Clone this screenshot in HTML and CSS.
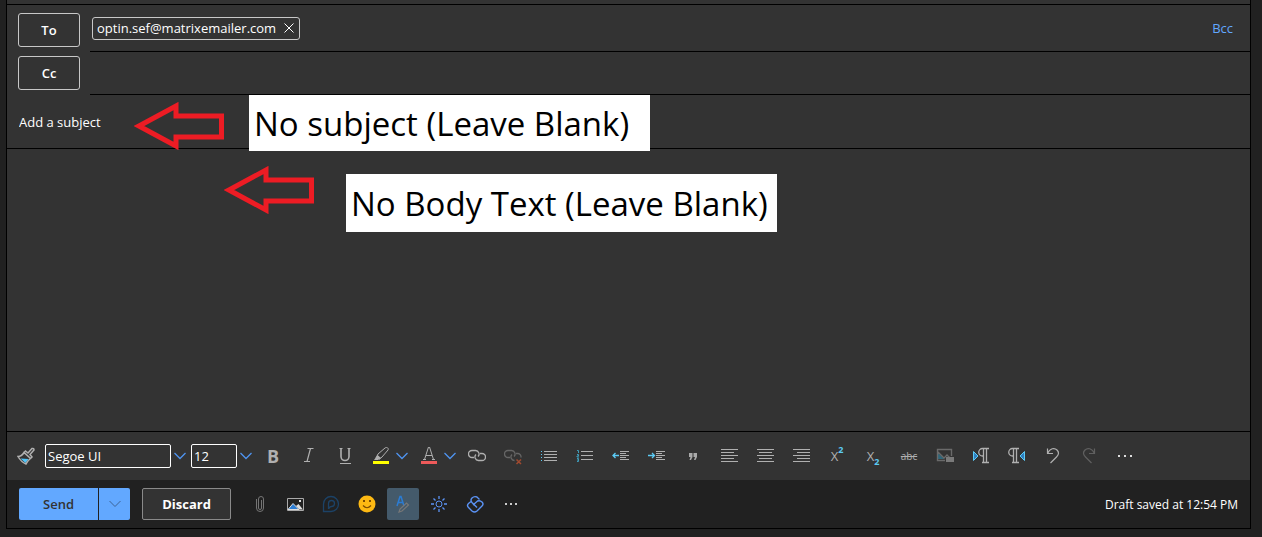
FILE: index.html
```html
<!DOCTYPE html>
<html lang="en">
<head>
  <meta charset="UTF-8">
  <meta name="viewport" content="width=device-width, initial-scale=1.0">
  <title>New message</title>
  <link rel="stylesheet" href="styles.css">
</head>
<body>
  <form class="compose">
    <div class="top-strip"></div>

    <!-- Recipients -->
    <div class="row row-to">
      <button type="button" class="recipient-button">To</button>
      <div class="field">
        <span class="chip">optin.sef@matrixemailer.com
          <button type="button" class="chip-remove" aria-label="Remove">
            <svg width="10" height="10" viewBox="0 0 10 10"><path d="M.5 .5l9 9M9.5 .5l-9 9"/></svg>
          </button>
        </span>
        <a href="#" class="bcc">Bcc</a>
      </div>
    </div>
    <div class="row row-cc">
      <button type="button" class="recipient-button">Cc</button>
      <div class="field"></div>
    </div>

    <input type="text" class="subject" placeholder="Add a subject" aria-label="Subject">
    <textarea class="message" aria-label="Message body"></textarea>

    <!-- Formatting toolbar -->
    <div class="toolbar">
      <button type="button" class="tool" aria-label="Format painter">
        <svg width="18" height="18" viewBox="0 0 18 18"><path d="M3.500 11.500l8 .5-3 4z" fill="#4fc3f7" stroke="none"/><path d="M1 9.500c2.500 0 4.500-1.500 6-4l6.500 6c-2 1.500-3.500 3-4.500 5.500C5.500 15.500 3 13 1 9.500zM7 5.500L8.500 4l2.500 2L15 1.500q2-.5 2 1.500L13 7.500l2 2.500-1.500 1.500" stroke-width="1.500"/></svg>
      </button>
      <input type="text" class="combo font-name" value="Segoe UI" aria-label="Font">
      <button type="button" class="arrow" aria-label="Choose font"><svg width="12" height="8" viewBox="0 0 12 8"><path d="M.5 1L6 6.500 11.500 1"/></svg></button>
      <input type="text" class="combo font-size" value="12" aria-label="Font size">
      <button type="button" class="arrow" aria-label="Choose font size"><svg width="12" height="8" viewBox="0 0 12 8"><path d="M.5 1L6 6.500 11.500 1"/></svg></button>
      <button type="button" class="tool bold">B</button>
      <button type="button" class="tool" aria-label="Italic">
        <svg width="18" height="18" viewBox="0 0 18 18"><path d="M7.500 1.500h6M4 14.500h6M10.500 1.500L7 14.500" stroke-width="1.200"/></svg>
      </button>
      <button type="button" class="tool" aria-label="Underline">
        <svg width="18" height="18" viewBox="0 0 18 18"><path d="M5 1v8.500a4 4 0 0 0 8 0V1" stroke-width="1.600"/><path d="M3.500 1.500h3M11.500 1.500h3M4 16.500h11"/></svg>
      </button>
      <div class="split">
        <button type="button" class="swatch" aria-label="Highlight">
          <svg width="18" height="18" viewBox="0 0 18 18"><path d="M4 11l2-4 7-6c2-1.500 4 .5 3 2L10 10l-3 2.500"/><path d="M2 13l3.500-5L9 11l-3 2z" fill="#b0b0b0" stroke="none"/><path d="M1 14h16v3H1z" fill="#ff0" stroke="none"/></svg>
        </button>
        <button type="button" class="arrow" aria-label="Highlight color"><svg width="12" height="8" viewBox="0 0 12 8"><path d="M.5 1L6 6.500 11.500 1"/></svg></button>
      </div>
      <div class="split">
        <button type="button" class="swatch" aria-label="Font color">
          <svg width="18" height="18" viewBox="0 0 18 18"><path d="M4.500 12.500L8.500 0h1L13.500 12.500M6 8.500h6M3 12.500h3M12 12.500h3"/><path d="M1 14h16v3H1z" fill="#ee5a5a" stroke="none"/></svg>
        </button>
        <button type="button" class="arrow" aria-label="Pick font color"><svg width="12" height="8" viewBox="0 0 12 8"><path d="M.5 1L6 6.500 11.500 1"/></svg></button>
      </div>
      <button type="button" class="tool" aria-label="Insert link">
        <svg width="18" height="18" viewBox="0 0 18 18"><path d="M6 10.500H4a3.500 3.500 0 0 1 0-7h3.500a3.500 3.500 0 0 1 2.500 6M12 6.500h2a3.500 3.500 0 0 1 0 7h-3.500a3.500 3.500 0 0 1-2.500-6" stroke-width="1.300"/></svg>
      </button>
      <button type="button" class="tool" aria-label="Remove link">
        <svg width="18" height="18" viewBox="0 0 18 18"><path d="M6 10.500H4a3.500 3.500 0 0 1 0-7h3.500a3.500 3.500 0 0 1 2.500 6M12 6.500h2a3.500 3.500 0 0 1 3 4M8 7.500a3.500 3.500 0 0 0 2.500 6" stroke="#666" stroke-width="1.300"/><path d="M12.500 12.500l4.500 4.500M17 12.500l-4.500 4.500" stroke="#a04a30" stroke-width="1.500"/></svg>
      </button>
      <button type="button" class="tool" aria-label="Bullets">
        <svg width="18" height="18" viewBox="0 0 18 18"><path d="M4 4.500h13M4 7.500h13M4 10.500h13M4 13.500h13"/><path d="M1 4.500h1M1 7.500h1M1 10.500h1M1 13.500h1" stroke="#5ccbf5"/></svg>
      </button>
      <button type="button" class="tool" aria-label="Numbering">
        <svg width="18" height="18" viewBox="0 0 18 18"><path d="M5 4.500h12M5 8.500h12M5 12.500h12"/><path d="M1 3.500h1.500V6M1 7.500h1.500v1.500H1v1h2M1 11.500h1.500v3H1M1 13h1.500" stroke="#3f9dbb"/></svg>
      </button>
      <button type="button" class="tool" aria-label="Decrease indent">
        <svg width="18" height="18" viewBox="0 0 18 18"><path d="M8 4.500h9M8 6.500h6M8 8.500h9M8 10.500h6M8 12.500h9"/><path d="M1 8.500h6M3.500 6L1 8.500 3.500 11" stroke="#5ccbf5" stroke-width="1.300"/></svg>
      </button>
      <button type="button" class="tool" aria-label="Increase indent">
        <svg width="18" height="18" viewBox="0 0 18 18"><path d="M8 4.500h9M8 6.500h6M8 8.500h9M8 10.500h6M8 12.500h9"/><path d="M0 8.500h6.500M4 6l2.500 2.500L4 11" stroke="#5ccbf5" stroke-width="1.300"/></svg>
      </button>
      <button type="button" class="tool" aria-label="Quote">
        <svg width="18" height="18" viewBox="0 0 18 18"><path d="M5 6h3.500v4L7 13H5.500l1-3H5zM9.500 6H13v4L11.500 13H10l1-3H9.500z" fill="#aaa" stroke="none"/></svg>
      </button>
      <button type="button" class="tool" aria-label="Align left">
        <svg width="18" height="18" viewBox="0 0 18 18"><path d="M1 2.500h17M1 5.500h13M1 8.500h17M1 11.500h13M1 14.500h17"/></svg>
      </button>
      <button type="button" class="tool" aria-label="Align center">
        <svg width="18" height="18" viewBox="0 0 18 18"><path d="M1 2.500h17M3 5.500h13M1 8.500h17M3 11.500h13M1 14.500h17"/></svg>
      </button>
      <button type="button" class="tool" aria-label="Align right">
        <svg width="18" height="18" viewBox="0 0 18 18"><path d="M1 2.500h17M5 5.500h13M1 8.500h17M5 11.500h13M1 14.500h17"/></svg>
      </button>
      <button type="button" class="tool script">X<sup>2</sup></button>
      <button type="button" class="tool script">X<sub>2</sub></button>
      <button type="button" class="tool strike">abc</button>
      <button type="button" class="tool" aria-label="Image alt text">
        <svg width="18" height="18" viewBox="0 0 18 18"><path d="M2 12V6l6.500 6z" fill="#2f6679" stroke="none"/><path d="M9 13.500H1.500V2.500h14V9M2 5l6 6 3-3 3 3" stroke="#6a6a6a" stroke-width="1.400"/><path d="M10 10h8v5h-8z" fill="#7a7a7a" stroke="none"/></svg>
      </button>
      <button type="button" class="tool" aria-label="Left to right">
        <svg width="18" height="18" viewBox="0 0 18 18"><path d="M1.500 4.500L6 9l-4.500 4.500z" fill="#2f7fc0" stroke="#5ccbf5"/><path d="M11 9h-.5a3.500 3.500 0 0 1 0-7.500H17M11.500 2v13M14.500 2v13M10 15.500h7" stroke-width="1.300"/></svg>
      </button>
      <button type="button" class="tool" aria-label="Right to left">
        <svg width="18" height="18" viewBox="0 0 18 18"><path d="M16.500 4.500L12 9l4.500 4.500z" fill="#2f7fc0" stroke="#5ccbf5"/><path d="M5 9h-.5a3.500 3.500 0 0 1 0-7.500H11M5.500 2v13M8.500 2v13M4 15.500h7" stroke-width="1.300"/></svg>
      </button>
      <button type="button" class="tool" aria-label="Undo">
        <svg width="18" height="18" viewBox="0 0 18 18"><path d="M3.500 1.500v5H9M3.500 6.500C6 1 10.500 .5 13 3s1.500 5-.5 7L6.500 16" stroke-width="1.200"/></svg>
      </button>
      <button type="button" class="tool" aria-label="Redo">
        <svg width="18" height="18" viewBox="0 0 18 18"><path d="M14.500 1.500v5H9M14.500 6.500C12 1 7.500 .5 5 3s-1.500 5 .5 7L11.500 16" stroke="#606060" stroke-width="1.200"/></svg>
      </button>
      <button type="button" class="tool" aria-label="More formatting">
        <svg width="18" height="18" viewBox="0 0 18 18"><path d="M2 8h2v2H2zM8 8h2v2H8zM14 8h2v2h-2z" fill="#ddd" stroke="none"/></svg>
      </button>
    </div>

    <!-- Send bar -->
    <div class="actions">
      <button type="submit" class="send">Send</button>
      <button type="button" class="send-options" aria-label="Send options"><svg width="12" height="8" viewBox="0 0 12 8"><path d="M.5 1L6 6.500 11.500 1"/></svg></button>
      <button type="button" class="discard">Discard</button>
      <div class="inserts">
        <button type="button" class="insert" aria-label="Attach">
          <svg width="18" height="18" viewBox="0 0 18 18"><path d="M11.500 5v8a1.500 1.500 0 0 1-3 0V4a2.500 2.500 0 0 1 5 0v9a3.500 3.500 0 0 1-7 0V4" stroke="#757575"/></svg>
        </button>
        <button type="button" class="insert" aria-label="Insert picture">
          <svg width="18" height="18" viewBox="0 0 18 18"><path d="M1.500 3.500h16v12h-16z" stroke="#aaa"/><path d="M2 14.500l5-6 6 6z" fill="#2b7cd3" stroke="#ddd"/><path d="M10 11l2.500-2 4.500 5.500h-3.500z" fill="#ddd" stroke="none"/><path d="M13 5h2v2h-2z" fill="#ddd" stroke="none"/></svg>
        </button>
        <button type="button" class="insert" aria-label="Loop">
          <svg width="18" height="18" viewBox="0 0 18 18"><path d="M1.500 16.500V9A7.500 7.500 0 1 1 9 16.500zM6.500 14V8.500a3 3 0 1 1 3 3c-2 0-2 1-3 2.500" stroke="#1c4266" stroke-width="1.300"/></svg>
        </button>
        <button type="button" class="insert" aria-label="Emoji">
          <svg width="18" height="18" viewBox="0 0 18 18"><circle cx="9" cy="9" r="8.500" fill="#fdb913" stroke="none"/><path d="M5 10.500q4 4.500 8 0" stroke="#7a4b00" stroke-width="1.200"/><path d="M5 5h2v2H5zM11 5h2v2h-2z" fill="#7a4b00" stroke="none"/></svg>
        </button>
        <button type="button" class="insert active" aria-label="Formatting options">
          <svg width="18" height="18" viewBox="0 0 18 18"><path d="M3 11L6 1.500h1L10 11M4.500 7.500h4" stroke="#2b7cd3" stroke-width="1.500"/><path d="M5 17l1-3 6.500-6 2 2L8 16z" stroke="#777" stroke-width="1.200"/></svg>
        </button>
        <button type="button" class="insert" aria-label="Toggle theme">
          <svg width="18" height="18" viewBox="0 0 18 18"><circle cx="9" cy="9" r="3"/><path d="M9 1v3M9 14v3M1 9h3M14 9h3M3.500 3.500l2 2M12.500 12.500l2 2M14.500 3.500l-2 2M5.500 12.500l-2 2" stroke-width="1.300"/></svg>
        </button>
        <button type="button" class="insert" aria-label="Add-ins">
          <svg width="18" height="18" viewBox="0 0 18 18"><path d="M9 10.500L6 7.500Q4 5 6 3t5-1l2.500 2.500M5 6.500L2.500 8.500q-2 2 0 4L6 16q2.500 2 5 0l5-5q2-2 0-4t-4.500-1L7 10M9 10.500l2 2" stroke-width="1.400"/></svg>
        </button>
        <button type="button" class="insert" aria-label="More">
          <svg width="18" height="18" viewBox="0 0 18 18"><path d="M3 8h2v2H3zM8 8h2v2H8zM13 8h2v2h-2z" fill="#ccc" stroke="none"/></svg>
        </button>
      </div>
      <span class="status">Draft saved at 12:54 PM</span>
    </div>
  </form>

  <!-- Callouts over the form -->
  <svg class="pointer pointer-subject" width="90" height="48" viewBox="0 0 90 48"><path d="M5 24L42 4V14H87.500V35H42V44z"/></svg>
  <div class="note note-subject">No subject (Leave Blank)</div>
  <svg class="pointer pointer-body" width="90" height="48" viewBox="0 0 90 48"><path d="M5 24L42 4V14H87.500V35H42V44z"/></svg>
  <div class="note note-body">No Body Text (Leave Blank)</div>
</body>
</html>
```
FILE: styles.css
```css
* {
  box-sizing: border-box;
}

body {
  margin: 0;
  padding: 0 11px 8px 6px;
  min-height: 100vh;
  display: flex;
  background-color: #212121;
  color: #fff;
  font-family: "Segoe UI", "Open Sans", "Noto Sans", sans-serif;
  font-size: 13px;
}

button,
input,
textarea {
  font: inherit;
  color: inherit;
  margin: 0;
  padding: 0;
  border: none;
  background: none;
}

button {
  display: flex;
  flex: none;
  justify-content: center;
  align-items: center;
}

svg {
  fill: none;
  stroke: #b0b0b0;
}

.compose {
  flex: 1;
  display: flex;
  flex-direction: column;
  background-color: #333;
  border: 1px solid #000;
  border-top: none;
}

.top-strip {
  height: 5px;
  border-bottom: 1px solid #000;
}

/* Recipients */
.row {
  display: flex;
  padding-left: 11px;
  gap: 10px;
}

.row-to {
  height: 47px;
}

.row-cc {
  height: 43px;
}

.recipient-button {
  width: 62px;
  height: 34px;
  margin-top: 8px;
  border: 1px solid #c8c8c8;
  border-radius: 3px;
  font-weight: 600;
}

.row-cc .recipient-button {
  margin-top: 4px;
}

.field {
  flex: 1;
  display: flex;
  justify-content: space-between;
  align-items: center;
  padding: 0 17px 0 2px;
  border-bottom: 1px solid #000;
}

.chip {
  display: flex;
  align-items: center;
  gap: 8px;
  height: 23px;
  padding: 0 5px 0 4px;
  border: 1px solid #c8c8c8;
  border-radius: 3px;
}

.chip-remove svg {
  stroke: #fff;
}

.bcc {
  color: #62a8ff;
  text-decoration: none;
}

.subject {
  height: 54px;
  padding: 0 12px;
  border-bottom: 1px solid #000;
}

.subject::placeholder {
  color: #fff;
  opacity: 1;
}

.message {
  flex: 1;
  resize: none;
  padding: 12px;
  outline: none;
}

/* Formatting toolbar */
.toolbar {
  display: flex;
  align-items: center;
  height: 49px;
  padding-left: 1px;
  border-top: 1px solid #000;
}

.tool {
  width: 36px;
  height: 36px;
  color: #b0b0b0;
}

.combo {
  height: 24px;
  padding: 0 2px;
  border: 1px solid #fff;
  border-radius: 2px;
}

.font-name {
  width: 126px;
  margin-left: 1px;
}

.font-size {
  width: 46px;
  margin-left: 2px;
}

.arrow {
  width: 18px;
  height: 24px;
}

.arrow svg {
  stroke: #4f94f0;
  stroke-width: 1.3;
}

.split {
  display: flex;
  align-items: center;
  width: 48px;
  padding-left: 3px;
}

.swatch {
  width: 30px;
  height: 36px;
}

.split .arrow {
  width: 12px;
}

.bold {
  font-size: 18px;
  font-weight: 700;
}

.strike {
  font-size: 10px;
  text-decoration: line-through;
}

.script {
  font-size: 13px;
}

.script sup,
.script sub {
  color: #5ccbf5;
  font-size: 9px;
  font-weight: 700;
  line-height: 12px;
}

.script sup {
  margin-bottom: 12px;
}

.script sub {
  margin-top: 12px;
}

/* Send bar */
.actions {
  display: flex;
  align-items: center;
  height: 48px;
  padding: 0 12px;
  background-color: #212121;
}

.send,
.send-options {
  height: 32px;
  background-color: #62a8ff;
  color: #333;
  font-weight: 600;
}

.send {
  width: 79px;
  border-radius: 2px 0 0 2px;
}

.send-options {
  width: 31px;
  margin-left: 1px;
  border-radius: 0 2px 2px 0;
}

.send-options svg {
  stroke: #3c6394;
}

.discard {
  width: 89px;
  height: 32px;
  margin: 0 12px;
  border: 1px solid #8a8a8a;
  border-radius: 2px;
  background-color: #333;
  font-weight: 700;
}

.inserts {
  display: flex;
  gap: 4px;
}

.insert {
  width: 32px;
  height: 32px;
  border-radius: 2px;
}

.insert svg {
  stroke: #5b93f5;
}

.active {
  background-color: #445a6b;
}

.status {
  margin-left: auto;
  font-size: 12px;
}

/* Callouts */
.pointer,
.note {
  position: absolute;
}

.pointer {
  stroke: #ed1c24;
  stroke-width: 5;
}

.pointer-subject {
  left: 134px;
  top: 102px;
}

.pointer-body {
  left: 224px;
  top: 166px;
}

.note {
  padding: 2px 21px 0 5px;
  background-color: #fff;
  color: #000;
  font-size: 33px;
  white-space: nowrap;
}

.note-subject {
  left: 249px;
  top: 95px;
  line-height: 54px;
}

.note-body {
  left: 346px;
  top: 174px;
  padding-right: 9px;
  line-height: 56px;
}
```
